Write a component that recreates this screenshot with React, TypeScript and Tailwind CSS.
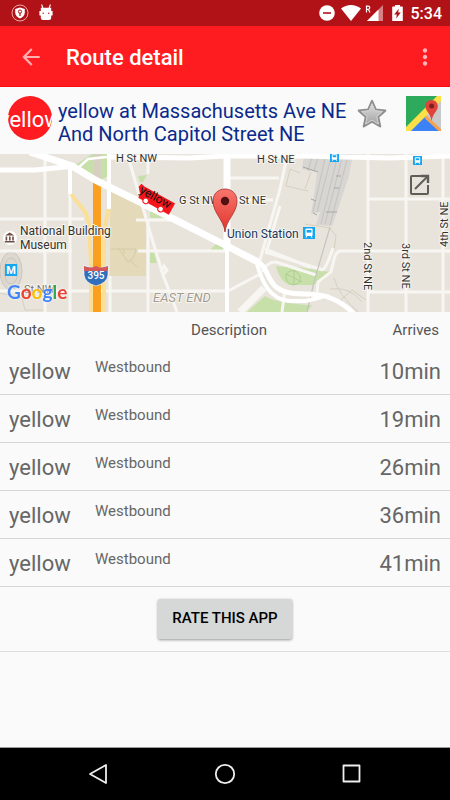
import React from "react";
import { MdArrowBack, MdMoreVert } from "react-icons/md";

interface Arrival {
  id: number;
  route: string;
  description: string;
  arrives: string;
}

const arrivals: Arrival[] = [
  { id: 1, route: "yellow", description: "Westbound", arrives: "10min" },
  { id: 2, route: "yellow", description: "Westbound", arrives: "19min" },
  { id: 3, route: "yellow", description: "Westbound", arrives: "26min" },
  { id: 4, route: "yellow", description: "Westbound", arrives: "36min" },
  { id: 5, route: "yellow", description: "Westbound", arrives: "41min" },
];

const StatusBar: React.FC = () => (
  <div className="flex h-[26px] items-center justify-between bg-[#b01217] pl-[11px] pr-2 text-white">
    <div className="flex items-center gap-2.5">
      <svg width="18" height="18" viewBox="0 0 18 18">
        <circle cx="9" cy="9" r="8" fill="none" stroke="#f0b9bb" strokeWidth="0.9" />
        <path d="M9 3.6 L13.8 5 V8.6 C13.8 11.6 11.6 13.4 9 14.6 C6.4 13.4 4.2 11.6 4.2 8.6 V5 Z" fill="#fff" />
        <circle cx="9" cy="7.6" r="1.6" fill="none" stroke="#b01217" strokeWidth="1" />
        <path d="M9 9 V12" stroke="#b01217" strokeWidth="1.2" />
      </svg>
      <svg width="14" height="18" viewBox="0 0 14 18">
        <path d="M2.6 0.5 L4 4.5 M11.4 0.5 L10 4.5" stroke="#fff" strokeWidth="1.1" />
        <path d="M1.8 3.8 H12.2 V7 H13.6 V11.5 H12.2 V14 Q12.2 16 10 16 H4 Q1.8 16 1.8 14 V11.5 H0.4 V7 H1.8 Z" fill="#fff" />
        <circle cx="4.2" cy="9.2" r="0.7" fill="#b01217" />
        <circle cx="9.8" cy="9.2" r="0.7" fill="#b01217" />
      </svg>
    </div>
    <div className="flex items-center">
      <svg width="16" height="16" viewBox="0 0 16 16">
        <circle cx="8" cy="8" r="7.8" fill="#fff" />
        <path d="M4 8 H12" stroke="#b01217" strokeWidth="1.6" />
      </svg>
      <svg className="ml-1.5" width="20" height="16" viewBox="0 0 20 16">
        <path d="M0 3.6 C6 -1.2 14 -1.2 20 3.6 L10 16 Z" fill="#fff" />
      </svg>
      <svg className="ml-1" width="19" height="16" viewBox="0 0 19 16">
        <path d="M2 16 L18 0 V16 Z" fill="#d88083" />
        <path d="M2 16 L13.5 4.5 V16 Z" fill="#fff" />
        <path d="M1.5 7.5 V1.2 H3.2 Q4.8 1.2 4.8 2.8 Q4.8 4.3 3.2 4.3 H1.5 M3.3 4.3 L5 7.5" fill="none" stroke="#fff" strokeWidth="1.2" />
      </svg>
      <svg className="ml-2" width="11" height="16" viewBox="0 0 11 16">
        <path d="M3 0 H8 V1.6 H10.2 Q10.8 1.6 10.8 2.2 V16 H0.2 V2.2 Q0.2 1.6 0.8 1.6 H3 Z" fill="#fff" />
        <path d="M6.8 3.8 L2.2 9.4 H4.8 L4.2 13.4 L8.8 7.6 H6.2 Z" fill="#b01217" />
      </svg>
      <span className="ml-2 pt-0.5 text-base font-medium leading-none">5:34</span>
    </div>
  </div>
);

const AppBar: React.FC = () => (
  <header className="flex h-[61px] items-center border-b border-[#f80d12] bg-[#ff1c21] pl-[18px] pr-3 pt-0.5 text-white">
    <button aria-label="Back" className="text-[#ffb0b2]">
      <MdArrowBack size={26} />
    </button>
    <h1 className="ml-[22px] flex-1 text-[22px] font-medium">Route detail</h1>
    <button aria-label="More options" className="text-[#ffb5b7]">
      <MdMoreVert size={26} />
    </button>
  </header>
);

const StarIcon: React.FC = () => (
  <svg width="30" height="30" viewBox="0 0 30 30">
    <defs>
      <linearGradient id="star" x1="0" y1="0" x2="0" y2="1">
        <stop offset="0" stopColor="#dedede" />
        <stop offset="1" stopColor="#a4a4a4" />
      </linearGradient>
    </defs>
    <path
      d="M15 2 L18.8 10.6 L28.2 11.6 L21.2 18 L23.2 27.4 L15 22.6 L6.8 27.4 L8.8 18 L1.8 11.6 L11.2 10.6 Z"
      fill="url(#star)"
      stroke="#8f8f8f"
      strokeWidth="2.2"
      strokeLinejoin="round"
    />
    <path
      d="M15 4.6 L18 11.6 L25.6 12.5 L19.8 17.6 L21.4 25 L15 21.2 L8.6 25 L10.2 17.6 L4.4 12.5 L12 11.6 Z"
      fill="url(#star)"
      stroke="#d4d4d4"
      strokeWidth="1"
      strokeLinejoin="round"
    />
  </svg>
);

const MapsIcon: React.FC = () => (
  <svg width="35" height="35" viewBox="0 0 35 35">
    <rect width="35" height="35" fill="#c9c9c9" />
    <path d="M0 0 H35 L0 35 Z" fill="#2eaa5c" />
    <path d="M31 0 H35 V5 L5 35 H0 V31 Z" fill="#fde047" />
    <path d="M19 21 L35 35 H5 Z" fill="#3b82f6" />
    <path d="M20.5 19.5 L35 33 V35 H32.5 L18.5 22 Z" fill="#f4a350" />
    <path d="M25.5 4 C21.8 4 19.4 6.8 19.4 10.2 C19.4 15 24.4 17 25.6 25 C26.8 17 31.8 15 31.8 10.2 C31.8 6.8 29.2 4 25.5 4 Z" fill="#e0433a" />
    <circle cx="25.6" cy="10" r="2.5" fill="#7b231d" />
  </svg>
);

const StopHeader: React.FC = () => (
  <section className="flex h-[67px] items-start pl-2 pr-[9px] pt-[9px]">
    <div className="flex size-[44px] shrink-0 items-center justify-center overflow-hidden rounded-full bg-[#ff1c21]">
      <span className="pt-1 text-[22px] leading-none text-white">yellow</span>
    </div>
    <h2 className="ml-1.5 mt-1 flex-1 text-[20px] leading-[23px] text-[#0b2a8c]">
      yellow at Massachusetts Ave NE And North Capitol Street NE
    </h2>
    <button aria-label="Add to favorites" className="mr-[19px] mt-[3px]">
      <StarIcon />
    </button>
    <button aria-label="Open in Maps">
      <MapsIcon />
    </button>
  </section>
);

const TransitBadge: React.FC<{ x: number; y: number; scale?: number }> = ({ x, y, scale = 1 }) => (
  <g transform={`translate(${x} ${y}) scale(${scale})`}>
    <rect width="12" height="12" fill="#16a5f3" />
    <rect x="2.4" y="1.6" width="7.2" height="7.4" rx="1" fill="#fff" />
    <rect x="3.6" y="3" width="4.8" height="2.6" fill="#16a5f3" />
    <path d="M4 8.6 L3 10.8 M8 8.6 L9 10.8" stroke="#fff" />
  </g>
);

const StopMap: React.FC = () => (
  <svg
    role="img"
    aria-label="Map of the stop"
    className="block h-[158px] w-full bg-[#e8e4dc]"
    viewBox="0 0 450 158"
    preserveAspectRatio="xMidYMid slice"
  >
    {/* parks and blocks */}
    <path d="M110 40 L114 33 L140 48 L146 68 V122 H110 Z" fill="#e4dab9" />
    <path d="M111 95 H136 Q134 106 128 108 L119 95 M124 95 V100 M130 106 L137 113" fill="none" stroke="#d0c6a2" strokeWidth="0.8" />
    <path d="M71 14 L92 0 H109 V22 L100 26 Z" fill="#c7dfa8" />
    <path d="M138 22 L147 21 L143 28 L140 28 Z" fill="#c7dfa8" />
    <path d="M211 95 L217 89 L226 95 V97 H212 Z" fill="#c7dfa8" />
    <path d="M150 98 H154 L157 109 H150 Z M150 58 H156 L165 64 H150 Z" fill="#c7dfa8" />
    <path d="M276 112 Q284 113 296 113 L330 118 L324 126 L313 131 H290 Q280 128 276 112 Z" fill="#c7dfa8" />
    <path d="M247 158 L265 142 Q278 150 312 151 L307 158 Z" fill="#c7dfa8" />
    <path d="M286 120 Q294 112 300 122 Q302 130 293 131 Q285 129 286 120 M286 120 L302 128 M294 116 V131" fill="none" stroke="#a9c98c" strokeWidth="0.8" />
    <path d="M94 0 H101 V30 H94 Z" fill="#d6cfc2" />
    <ellipse cx="11" cy="117" rx="11" ry="19" fill="#dcd8d0" stroke="#cac6be" />
    <ellipse cx="11" cy="117" rx="7" ry="13" fill="none" stroke="#cac6be" />
    <path d="M0 139 L22 144 L25 156 H44 M286 32 L290 15 L300 19 M286 32 L308 37 M305 35 L311 18 M305 70 L330 74 L336 82 L334 96" fill="none" stroke="#d2cab8" strokeWidth="0.8" />
    <path d="M330 135 Q350 132 362 148 M336 150 L352 136 L366 146 M334 124 Q338 140 358 158" fill="none" stroke="#d2cabb" strokeWidth="0.8" />

    {/* rail yard */}
    <path d="M304 0 H353 L349 22 L337 58 L332 72 L316 71 L320 58 L311 60 L315 34 L317 18 L302 15 Z" fill="#d8d6d2" />
    <path d="M313 0 L308 17 M319 0 L314 17 M326 0 L313 58 M332 0 L317 58 M338 0 L321 70 M343 0 L325 70 M348 2 L330 71" stroke="#c8c6c2" strokeWidth="1.2" />
    <path d="M303 13 L318 18 M311 45 L316 47 M326 58 H337 M313 59 L317 61 M336 22 H341 M334 34 H339" stroke="#a9a7a4" strokeWidth="1" />

    {/* minor streets */}
    <g fill="none" stroke="#f8f6f2" strokeWidth="3">
      <path d="M45 0 V158 M0 65 H84 M0 97 H72 M0 137 H228 L260 120 M70 12 V158 M110 122 V158" />
      <path d="M129 6 L150 78 L163 121 L177 158 M148 0 V20 M148 66 V158 M136 66 H172 M138 97 H226" />
      <path d="M227 24 H279 M227 46 H273 M163 121 L167 116 L164 112 L161 118" />
      <path d="M287 2 L280 35 L260 106 M267 96 L280 52" />
      <path d="M265 95 L310 113 M265 98 L323 116 M262 118 Q268 107 276 108 L316 121" />
      <path d="M368 0 V158 M406 0 V158 M443 0 V158 M368 45 H450 M368 138 H450" />
      <path d="M450 97 H340 Q336 98 334 105 L331 118 L318 128 L317 138 M333 94 Q327 112 323 116" />
      <path d="M285 136 L282 158" />
    </g>
    <path d="M264 134 L240 158" stroke="#f8f6f2" strokeWidth="7" />
    <path d="M78 14 L88 5 L116 2" fill="none" stroke="#fff" strokeWidth="2.5" />
    <path d="M330 73 L314 128 L307 158" fill="none" stroke="#c6c4c0" strokeWidth="1.2" />

    {/* ramps and interstate */}
    <path d="M72 40 C74 48 88 54 89 72 L91 110 V158" fill="none" stroke="#fcdf97" strokeWidth="4" />
    <path d="M109 54 Q104 72 104 90 V158" fill="none" stroke="#fcdf97" strokeWidth="4" />
    <path d="M97 28 V158" stroke="#fa9f1f" strokeWidth="8" />

    {/* main avenues */}
    <g fill="none" stroke="#fff">
      <path d="M0 16 L35 16 L75 12" strokeWidth="5" />
      <path d="M110 3 L190 4 L225 2 H300 L390 4 L450 2" strokeWidth="5" />
      <path d="M70 12 V40 M109 0 V55" strokeWidth="4" />
      <path d="M227 0 V96" strokeWidth="7" />
      <path d="M227 92 V158" strokeWidth="4" />
      <path d="M30 -2 L72 12 L97 27 L150 53 L227 92 L258 108" strokeWidth="7" />
      <path d="M255 106 C268 112 266 124 276 133 C290 144 310 137 328 143 Q344 149 354 160" strokeWidth="5" />
      <path d="M257 110 C262 128 270 146 290 147 H306 L322 143" strokeWidth="4" />
    </g>

    {/* interstate shield */}
    <path d="M84 112 Q96 116 108 112 V121 Q107 129 96 132 Q85 129 84 121 Z" fill="#316fbd" stroke="#fff" strokeWidth="0.6" />
    <path d="M84 112 Q90 115 96 112 Q102 115 108 112 V117 H84 Z" fill="#d6575a" />
    <text x="96" y="125" textAnchor="middle" fontSize="10" fontWeight="500" fill="#fff">395</text>

    {/* place markers */}
    <circle cx="10" cy="84" r="7" fill="#fff" />
    <path d="M5 81.5 L9.7 78.6 L14.4 81.5 Z M5.6 82.5 H7.2 V86.5 H5.6 Z M9 82.5 H10.6 V86.5 H9 Z M12.2 82.5 H13.8 V86.5 H12.2 Z M4.8 87 H14.6 V88.4 H4.8 Z" fill="#6d4c41" />
    <rect x="5" y="110" width="12" height="12" fill="#16a5f3" />
    <text x="11" y="120" textAnchor="middle" fontSize="11" fontWeight="700" fill="#fff">M</text>
    <TransitBadge x={303} y={73} />
    <TransitBadge x={330} y={-1} scale={0.75} />
    <TransitBadge x={413} y={2} scale={0.75} />

    {/* street and place names */}
    <g fontSize="11" fill="#35322e" stroke="#f8f6f2" strokeWidth="2" paintOrder="stroke" strokeLinejoin="round">
      <text x="116" y="8">H St NW</text>
      <text x="257" y="9">H St NE</text>
      <text x="179" y="50">G St NW</text>
      <text x="239" y="50">St NE</text>
      <text transform="translate(364 88) rotate(90)">2nd St NE</text>
      <text transform="translate(402 89) rotate(90)">3rd St NE</text>
      <text transform="translate(448 93) rotate(-90)">4th St NE</text>
      <g fontSize="12">
        <text x="20" y="81">National Building</text>
        <text x="20" y="95">Museum</text>
        <text x="227" y="84" fill="#16375e">Union Station</text>
      </g>
      <text x="153" y="148" fontSize="13" fontStyle="italic" fill="#a29c90">EAST END</text>
      <text x="24" y="139" fill="#77736c">St NW</text>
    </g>

    {/* bus position */}
    <g transform="translate(138 38) rotate(29)">
      <rect x="3" y="-8" width="35" height="13" fill="#f5161b" />
      <path d="M-2 -5 L-1 -9 L3 -8 L3 1 Z" fill="#f5161b" />
      <circle cx="11" cy="4" r="2.8" fill="#fff" stroke="#f5161b" strokeWidth="1" />
      <circle cx="28" cy="4" r="2.8" fill="#fff" stroke="#f5161b" strokeWidth="1" />
      <text x="1" y="0" fontSize="12" fill="#111">yellow</text>
    </g>

    {/* stop pin */}
    <defs>
      <linearGradient id="pin" x1="0" y1="0" x2="0" y2="1">
        <stop offset="0" stopColor="#f9766c" />
        <stop offset="1" stopColor="#e0342d" />
      </linearGradient>
    </defs>
    <path
      d="M225 78 C224 66 213 59 213 47 C213 40 218 35 225 35 C232 35 237 40 237 47 C237 59 226 66 225 78 Z"
      fill="url(#pin)"
      stroke="#a5302b"
      strokeWidth="0.8"
    />
    <circle cx="225" cy="47" r="4.2" fill="#521110" />

    {/* open full map */}
    <g fill="none" stroke="#5f5d58" strokeWidth="2">
      <path d="M421 22 H412 Q411 22 411 23 V39 Q411 40 412 40 H427 Q428 40 428 39 V31" />
      <path d="M415 35 L427 23" />
      <path d="M421 22 H428 V29" strokeWidth="2.4" />
    </g>

    {/* map attribution */}
    <text
      x="7"
      y="145"
      fontSize="19"
      fontWeight="700"
      className="font-[Lato,sans-serif] drop-shadow-[0_0_1px_#fff]"
    >
      <tspan fill="#4285f4">G</tspan>
      <tspan fill="#ea4335">o</tspan>
      <tspan fill="#fbbc05">o</tspan>
      <tspan fill="#4285f4">g</tspan>
      <tspan fill="#34a853">l</tspan>
      <tspan fill="#ea4335">e</tspan>
    </text>
  </svg>
);

const ArrivalsTable: React.FC = () => (
  <table className="w-full table-fixed text-[#666]">
    <thead>
      <tr className="h-[34px] text-[15px] text-[#555]">
        <th className="w-[95px] pl-1.5 pt-0.5 text-left font-normal">Route</th>
        <th className="pt-0.5 text-center font-normal">Description</th>
        <th className="w-[87px] pr-[11px] pt-0.5 text-right font-normal">Arrives</th>
      </tr>
    </thead>
    <tbody>
      {arrivals.map((arrival) => (
        <tr key={arrival.id} className="h-12 border-b border-[#d6d6d6]">
          <td className="pl-[9px] pt-1 text-[22px] leading-7">{arrival.route}</td>
          <td className="pb-1.5 text-[15px] leading-5">{arrival.description}</td>
          <td className="pr-[9px] pt-1 text-right text-[22px] leading-7">{arrival.arrives}</td>
        </tr>
      ))}
    </tbody>
  </table>
);

const NavBar: React.FC = () => (
  <nav className="mt-auto flex h-[53px] items-center justify-center gap-[105px] border-t border-[#9a9a9a] bg-black">
    <button aria-label="Back">
      <svg width="22" height="22" viewBox="0 0 22 22" fill="none" stroke="#eee" strokeWidth="1.8" strokeLinejoin="round">
        <path d="M19 2 V20 L3 11 Z" />
      </svg>
    </button>
    <button aria-label="Home">
      <svg width="22" height="22" viewBox="0 0 22 22" fill="none" stroke="#eee" strokeWidth="1.8">
        <circle cx="11" cy="11" r="9.2" />
      </svg>
    </button>
    <button aria-label="Recent apps">
      <svg width="22" height="22" viewBox="0 0 22 22" fill="none" stroke="#eee" strokeWidth="1.8" strokeLinejoin="round">
        <rect x="2.5" y="2.5" width="16" height="16" />
      </svg>
    </button>
  </nav>
);

const App: React.FC = () => {
  return (
    <div className="flex min-h-screen flex-col bg-[#fafafa] font-[Roboto,sans-serif]">
      <StatusBar />
      <AppBar />
      <main>
        <StopHeader />
        <StopMap />
        <ArrivalsTable />
        <div className="flex justify-center border-b border-[#dedede] py-3">
          <button className="h-10 rounded-xs bg-[#d6d8d7] px-3.5 text-[15px] font-medium text-black shadow-[0_1px_3px_rgba(0,0,0,0.4)]">
            RATE THIS APP
          </button>
        </div>
      </main>
      <NavBar />
    </div>
  );
};

export default App;
